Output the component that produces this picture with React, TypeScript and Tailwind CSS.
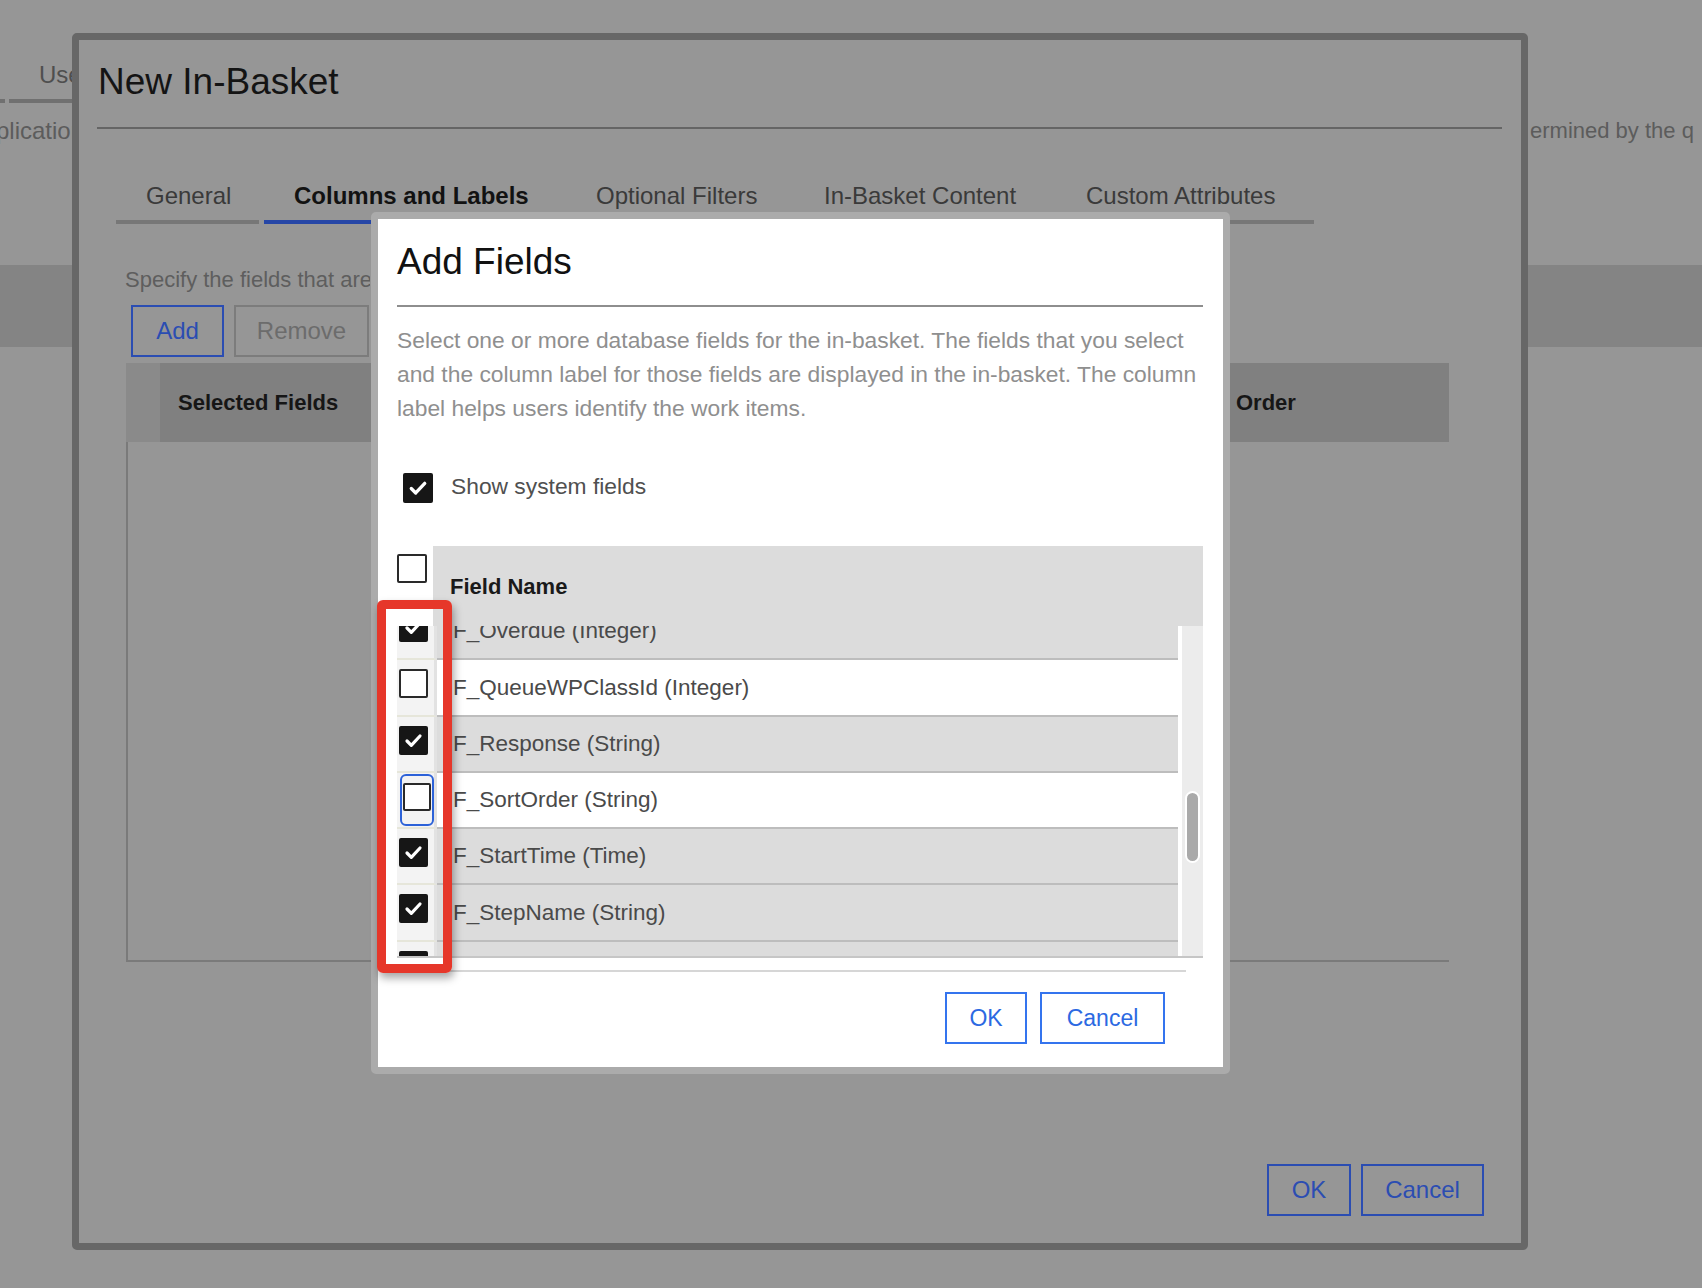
import React from "react";

type Row = { name: string; checked: boolean; focus?: boolean };

const rows: Row[] = [
  { name: "F_Overdue (Integer)", checked: true },
  { name: "F_QueueWPClassId (Integer)", checked: false },
  { name: "F_Response (String)", checked: true },
  { name: "F_SortOrder (String)", checked: false, focus: true },
  { name: "F_StartTime (Time)", checked: true },
  { name: "F_StepName (String)", checked: true },
  { name: "F_Subject (String)", checked: true },
];

const tabs = [
  { label: "General", w: "w-[143px]", active: false },
  { label: "Columns and Labels", w: "w-[297px]", active: true },
  { label: "Optional Filters", w: "w-[223px]", active: false },
  { label: "In-Basket Content", w: "w-[257px]", active: false },
  { label: "Custom Attributes", w: "w-[258px]", active: false },
];

function Check({ checked }: { checked: boolean }) {
  if (!checked) {
    return <div className="h-[29px] w-[29px] rounded-[2px] border-2 border-[#2a2a2a] bg-white" />;
  }
  return (
    <div className="h-[29px] w-[29px] rounded-[2px] bg-[#161616]">
      <svg viewBox="0 0 29 29" className="h-[29px] w-[29px]">
        <path d="M8 15 L12.3 19.3 L21 10" fill="none" stroke="white" strokeWidth="3.2" strokeLinecap="round" strokeLinejoin="round" />
      </svg>
    </div>
  );
}

export default function App() {
  return (
    <div className="relative h-[1288px] w-[1702px] overflow-hidden bg-[#969696] font-['Liberation_Sans',Arial,sans-serif]">
      {/* ================= PAGE BEHIND ================= */}
      <div className="pt-[61px]">
        <div className="pl-[39px] text-[24px] leading-[28px] text-[#4f4f4f]">Use</div>
        <div className="mt-[10px] flex h-[4px] gap-[4px]">
          <div className="w-[5px] bg-[#707070]" />
          <div className="w-[64px] bg-[#707070]" />
        </div>
        <div className="mt-[14px] flex items-center leading-[28px] text-[#5c5c5c]">
          <div className="-ml-[4px] w-[1534px] shrink-0 whitespace-nowrap text-[24px]">plication</div>
          <div className="shrink-0 whitespace-nowrap text-[22px]">ermined by the q</div>
        </div>
        <div className="mt-[120px] h-[82px] bg-[#848484]" />
      </div>

      {/* ================= NEW IN-BASKET DIALOG ================= */}
      <div className="absolute left-[72px] top-[33px] flex h-[1217px] w-[1456px] flex-col rounded-[5px] border-[7px] border-[#676767] bg-[#969696]">
        <div className="ml-[19px] mt-[20px] text-[37px] leading-[44px] text-[#141414]">New In-Basket</div>
        <div className="ml-[18px] mr-[19px] mt-[23px] h-[2px] bg-[#656565]" />

        <div className="ml-[37px] mt-[53px] flex gap-[5px]">
          {tabs.map((t) => (
            <div
              key={t.label}
              className={`${t.w} whitespace-nowrap pb-[10px] pl-[30px] text-[24px] leading-[28px] border-b-[4px] ${
                t.active ? "border-[#2646a6] font-bold text-[#121212]" : "border-[#777777] text-[#3a3a3a]"
              }`}
            >
              {t.label}
            </div>
          ))}
        </div>

        <div className="ml-[46px] mt-[43px] w-[245px] overflow-hidden whitespace-nowrap text-[22px] leading-[26px] text-[#5e5e5e]">
          Specify the fields that are
        </div>

        <div className="ml-[52px] mt-[12px] flex gap-[10px]">
          <button className="h-[52px] w-[93px] border-2 border-[#2b4db2] text-[24px] text-[#2b4db2]">Add</button>
          <button className="h-[52px] w-[135px] border-2 border-[#7c7c7c] text-[24px] text-[#6c6c6c]">Remove</button>
        </div>

        <div className="ml-[47px] mt-[6px] w-[1323px]">
          <div className="flex h-[79px] text-[22px] font-bold text-[#161616]">
            <div className="w-[34px] bg-[#8a8a8a]" />
            <div className="flex flex-1 items-center bg-[#808080]">
              <div className="w-[1058px] pl-[18px]">Selected Fields</div>
              <div className="pl-[18px]">Order</div>
            </div>
          </div>
          <div className="h-[520px] border-b-2 border-l-2 border-[#7a7a7a]" />
        </div>

        <div className="mr-[37px] mt-[202px] flex justify-end gap-[10px]">
          <button className="h-[52px] w-[84px] border-2 border-[#2b4db2] text-[24px] text-[#2b4db2]">OK</button>
          <button className="h-[52px] w-[123px] border-2 border-[#2b4db2] text-[24px] text-[#2b4db2]">Cancel</button>
        </div>
      </div>

      {/* ================= ADD FIELDS MODAL ================= */}
      <div className="absolute left-[371px] top-[212px] flex h-[862px] w-[859px] flex-col rounded-[5px] border-[7px] border-[#ababab] bg-white pl-[19px] pr-[20px]">
        <div className="mt-[21px] text-[37px] leading-[44px] text-[#111]">Add Fields</div>
        <div className="mt-[21px] h-[2px] bg-[#8e8e8e]" />

        <div className="mt-[16px] whitespace-nowrap text-[22.8px] leading-[34px] text-[#8f8f8f]">
          Select one or more database fields for the in-basket. The fields that you select
          <br />
          and the column label for those fields are displayed in the in-basket. The column
          <br />
          label helps users identify the work items.
        </div>

        <div className="ml-[6px] mt-[48px] flex items-center gap-[18px]">
          <div className="h-[30px] w-[30px] rounded-[2px] bg-[#161616]">
            <svg viewBox="0 0 29 29" className="h-[30px] w-[30px]">
              <path d="M8 15 L12.3 19.3 L21 10" fill="none" stroke="white" strokeWidth="3.2" strokeLinecap="round" strokeLinejoin="round" />
            </svg>
          </div>
          <span className="-mt-[4px] text-[22.8px] leading-[30px] text-[#505050]">Show system fields</span>
        </div>

        {/* table */}
        <div className="mt-[43px]">
          <div className="flex h-[80px]">
            <div className="w-[36px] pt-[8px]">
              <div className="h-[29px] w-[30px] rounded-[2px] border-2 border-[#2a2a2a] bg-white" />
            </div>
            <div className="flex flex-1 items-center bg-[#dcdcdc] pl-[17px] text-[22px] font-bold text-[#1a1a1a]">
              Field Name
            </div>
          </div>

          <div className="flex h-[330px] gap-[4px]">
            <div className="w-[781px] overflow-hidden">
              <div className="-mt-[22px]">
                {rows.map((r) => (
                  <div key={r.name} className="flex h-[56.3px]">
                    <div className="w-[40px] border-b-2 border-r-[3px] border-b-[#e6e6da] border-r-[#e2e2e2] bg-[#f3f3f3]">
                      {r.focus ? (
                        <div className="ml-[3px] mt-[1px] h-[52px] w-[34px] rounded-[6px] border-2 border-[#2c62d8] bg-[#f3f3f3] pl-[1px] pt-[7px]">
                          <div className="h-[28px] w-[28px] rounded-[2px] border-2 border-[#2a2a2a] bg-white" />
                        </div>
                      ) : (
                        <div className="pl-[2px] pt-[9px]">
                          <Check checked={r.checked} />
                        </div>
                      )}
                    </div>
                    <div
                      className={`flex flex-1 items-center border-b-2 border-[#bdbdbd] pl-[16px] text-[22.5px] text-[#4a4a4a] ${
                        r.checked ? "bg-[#dcdcdc]" : "bg-white"
                      }`}
                    >
                      {r.name}
                    </div>
                  </div>
                ))}
              </div>
            </div>
            <div className="w-[21px] bg-[#ececec] px-[3px] pt-[165px]">
              <div className="h-[72px] w-[15px] rounded-full border-2 border-white bg-[#a9a9a9]" />
            </div>
          </div>
          <div className="h-[2px] bg-[#c6c6c6]" />
          <div className="mt-[12px] h-[2px] w-[789px] bg-[#d6d6d6]" />
        </div>

        <div className="mr-[38px] mt-[20px] flex justify-end gap-[13px]">
          <button className="h-[52px] w-[82px] border-2 border-[#3474ee] text-[23px] text-[#2c69e2]">OK</button>
          <button className="h-[52px] w-[125px] border-2 border-[#3474ee] text-[23px] text-[#2c69e2]">Cancel</button>
        </div>
      </div>

      {/* ================= RED HIGHLIGHT ================= */}
      <div className="absolute left-[377px] top-[600px] h-[373px] w-[75px] rounded-[6px] border-[9px] border-[#e6372a] shadow-[2px_5px_8px_rgba(0,0,0,0.35)]" />
    </div>
  );
}
